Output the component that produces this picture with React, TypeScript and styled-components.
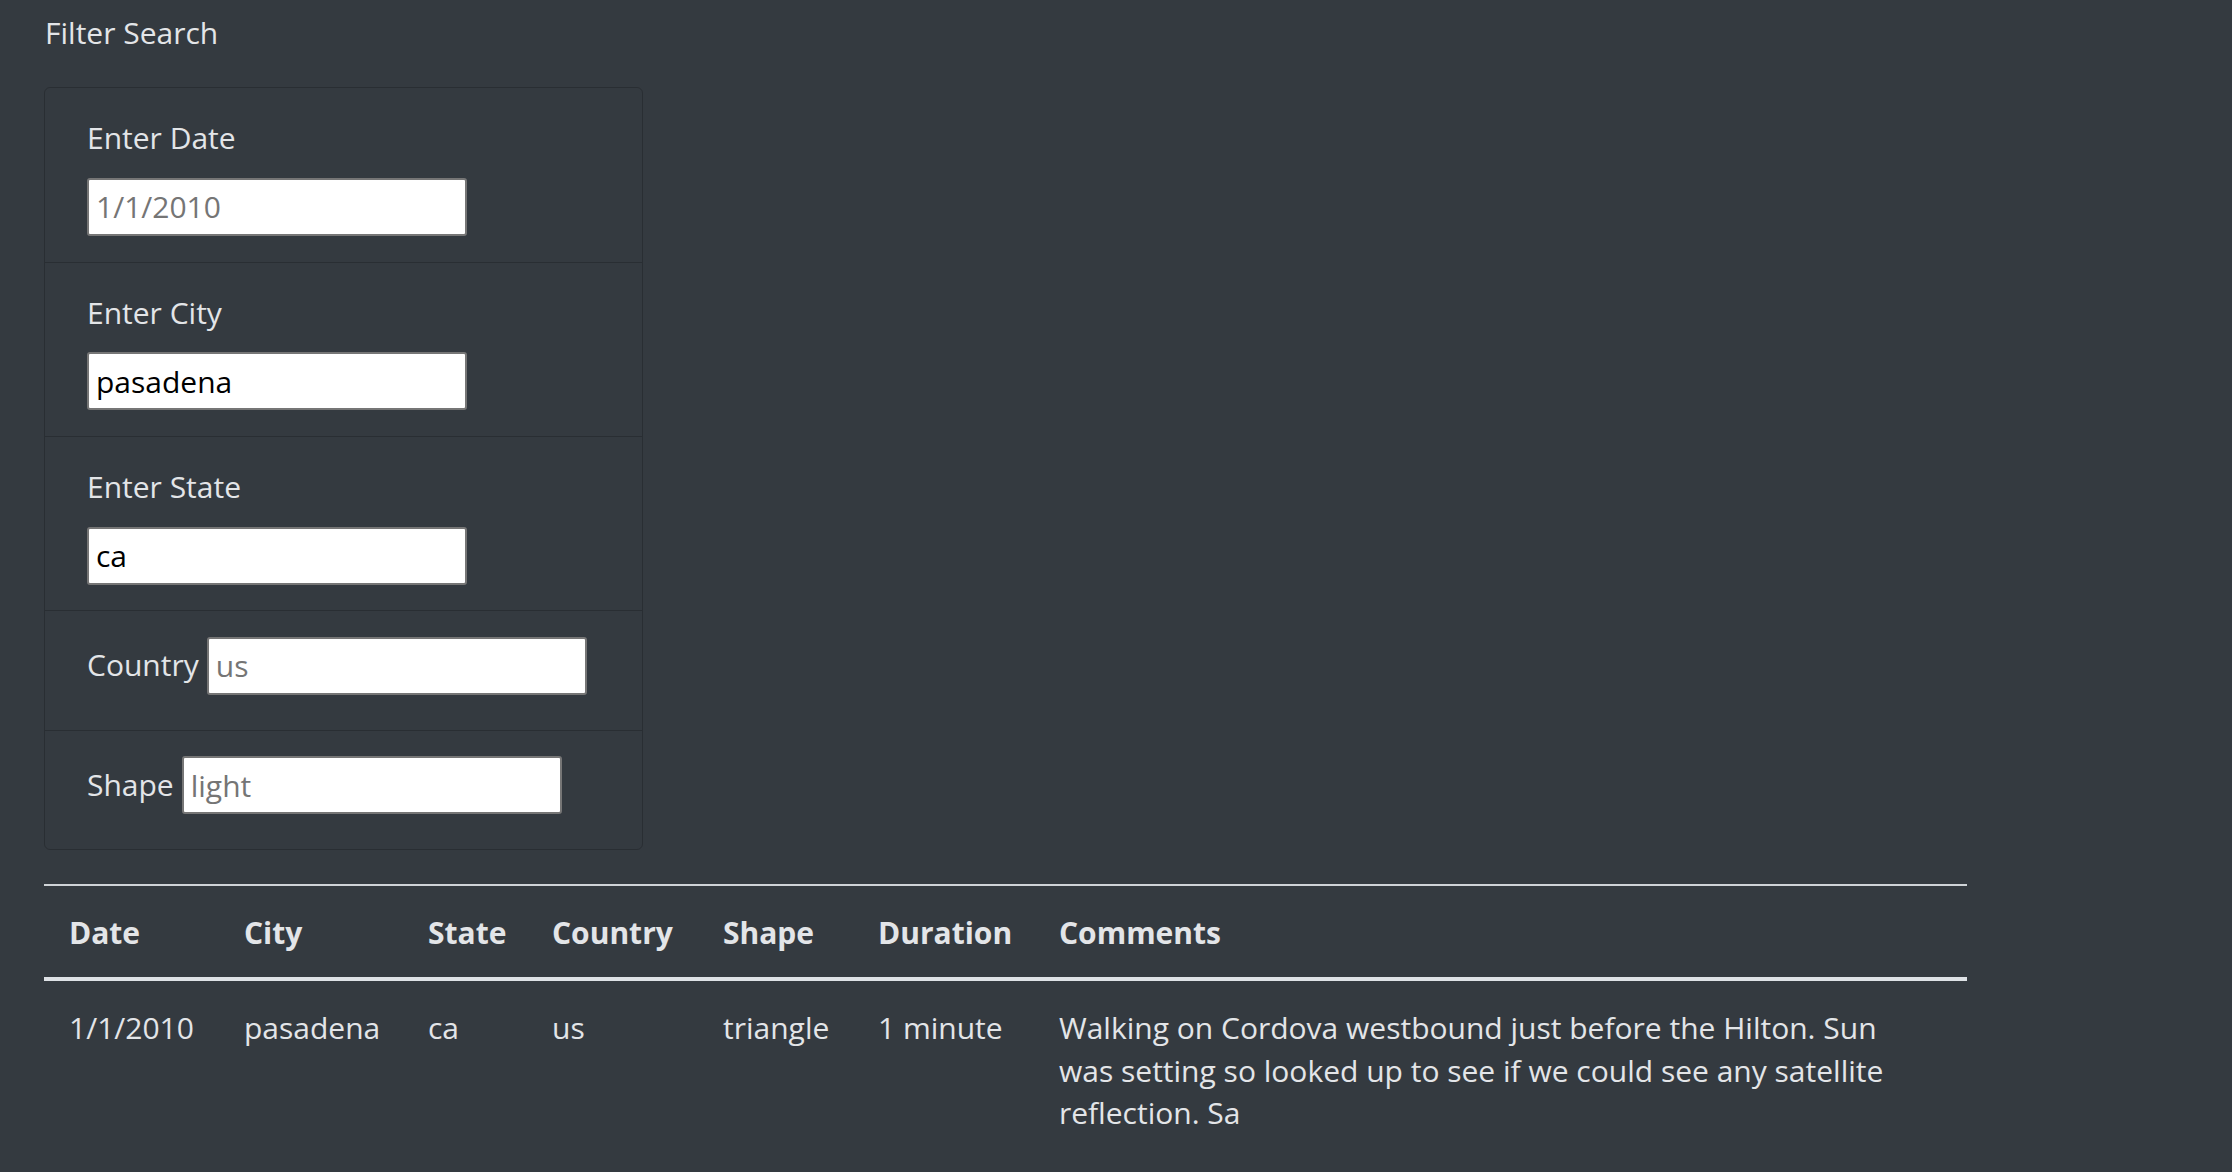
import React from 'react'
import styled, { createGlobalStyle } from 'styled-components'

const GlobalStyle = createGlobalStyle`
  html, body {
    margin: 0;
    padding: 0;
    background-color: #343a40;
  }

  body {
    font-family: "Open Sans", "Noto Sans", sans-serif;
    font-size: 30px;
    line-height: 42.7px;
    color: #e3e5e8;
  }

  * {
    box-sizing: border-box;
  }
`

const Page = styled.main`
  min-height: 1172px;
  padding: 11.5px 266px 0 44px;
`

const Title = styled.div`
  margin: 0 0 33px 1px;
`

const FilterCard = styled.ul`
  width: 599px;
  margin: 0;
  padding: 0;
  list-style: none;
  border: 1px solid rgba(0, 0, 0, 0.2);
  border-radius: 6px;
`

const FilterItem = styled.li<{ $inline?: boolean }>`
  display: flex;
  flex-direction: ${(p) => (p.$inline ? 'row' : 'column')};
  align-items: ${(p) => (p.$inline ? 'center' : 'flex-start')};
  gap: ${(p) => (p.$inline ? '8px' : '18px')};
  padding: ${(p) => (p.$inline ? '25.5px 42px 35px' : '29px 42px 25.6px')};
  border-bottom: 1px solid rgba(0, 0, 0, 0.2);

  &:last-child {
    border-bottom: none;
  }
`

const Label = styled.label`
  display: block;
`

const TextInput = styled.input`
  width: 380px;
  height: 58px;
  padding: 0 7px;
  border: 2px solid #767676;
  border-radius: 3px;
  background: #fff;
  color: #000;
  font-family: inherit;
  font-size: 30px;
  outline: none;

  &::placeholder {
    color: #757575;
    opacity: 1;
  }
`

const Table = styled.table`
  width: 1923px;
  margin-top: 34px;
  border-collapse: collapse;
  table-layout: fixed;
`

const HeadCell = styled.th`
  padding: 26px 25px 22px;
  text-align: left;
  font-weight: 700;
  vertical-align: bottom;
  border-top: 2px solid #cfd3d7;
  border-bottom: 4px solid #dee2e6;
`

const Cell = styled.td<{ $wide?: boolean }>`
  padding: 26px ${(p) => (p.$wide ? '50px' : '25px')} 25px 25px;
  vertical-align: top;
`

const columns = [
  { name: 'Date', width: 175 },
  { name: 'City', width: 184 },
  { name: 'State', width: 124 },
  { name: 'Country', width: 171 },
  { name: 'Shape', width: 155 },
  { name: 'Duration', width: 181 },
  { name: 'Comments', width: 933 },
]

const sightings = [
  {
    date: '1/1/2010',
    city: 'pasadena',
    state: 'ca',
    country: 'us',
    shape: 'triangle',
    duration: '1 minute',
    comments:
      'Walking on Cordova westbound just before the Hilton. Sun was setting so looked up to see if we could see any satellite reflection. Sa',
  },
]

export default function App() {
  return (
    <>
      <GlobalStyle />
      <Page>
        <Title>Filter Search</Title>
        <FilterCard>
          <FilterItem>
            <Label htmlFor="datetime">Enter Date</Label>
            <TextInput id="datetime" type="text" placeholder="1/1/2010" />
          </FilterItem>
          <FilterItem>
            <Label htmlFor="city">Enter City</Label>
            <TextInput id="city" type="text" defaultValue="pasadena" />
          </FilterItem>
          <FilterItem>
            <Label htmlFor="state">Enter State</Label>
            <TextInput id="state" type="text" defaultValue="ca" />
          </FilterItem>
          <FilterItem $inline>
            <Label htmlFor="country">Country</Label>
            <TextInput id="country" type="text" placeholder="us" />
          </FilterItem>
          <FilterItem $inline>
            <Label htmlFor="shape">Shape</Label>
            <TextInput id="shape" type="text" placeholder="light" />
          </FilterItem>
        </FilterCard>

        <Table>
          <colgroup>
            {columns.map((c) => (
              <col key={c.name} style={{ width: c.width }} />
            ))}
          </colgroup>
          <thead>
            <tr>
              {columns.map((c) => (
                <HeadCell key={c.name}>{c.name}</HeadCell>
              ))}
            </tr>
          </thead>
          <tbody>
            {sightings.map((s, i) => (
              <tr key={i}>
                <Cell>{s.date}</Cell>
                <Cell>{s.city}</Cell>
                <Cell>{s.state}</Cell>
                <Cell>{s.country}</Cell>
                <Cell>{s.shape}</Cell>
                <Cell>{s.duration}</Cell>
                <Cell $wide>{s.comments}</Cell>
              </tr>
            ))}
          </tbody>
        </Table>
      </Page>
    </>
  )
}
